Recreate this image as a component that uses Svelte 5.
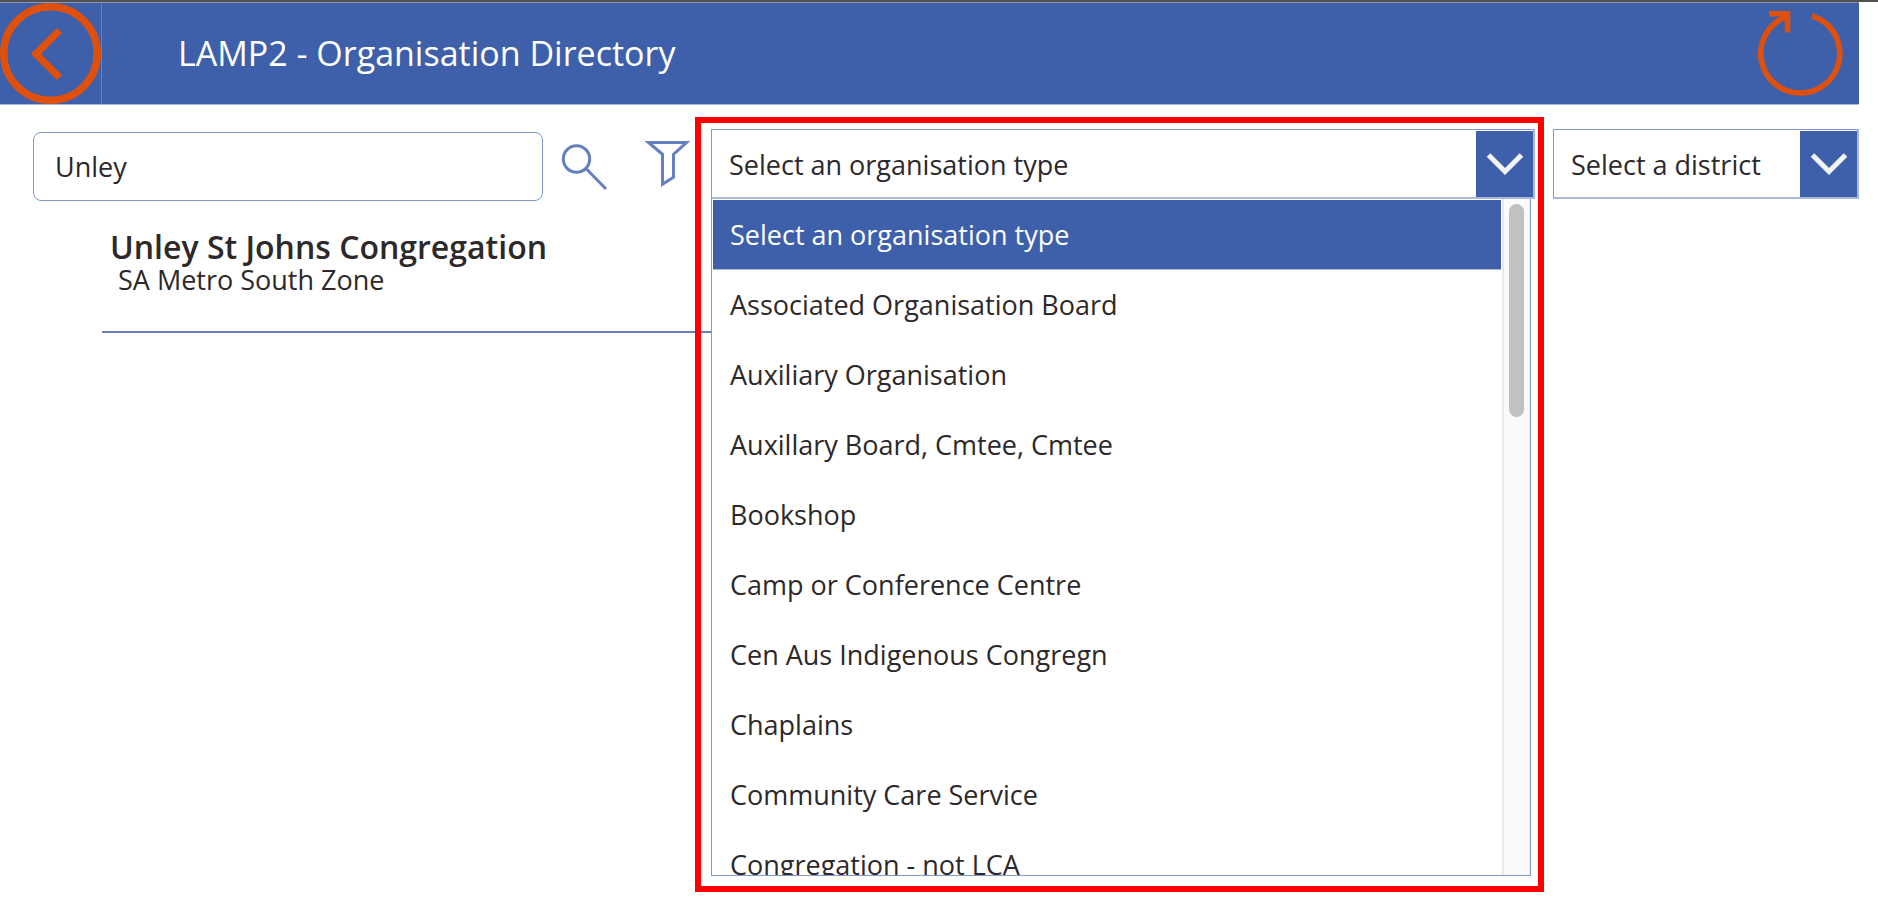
<script>
  const types = [
    "Select an organisation type",
    "Associated Organisation Board",
    "Auxiliary Organisation",
    "Auxillary Board, Cmtee, Cmtee",
    "Bookshop",
    "Camp or Conference Centre",
    "Cen Aus Indigenous Congregn",
    "Chaplains",
    "Community Care Service",
    "Congregation - not LCA",
  ];

  const results = [
    { name: "Unley St Johns Congregation", zone: "SA Metro South Zone" },
  ];

  let search = $state("Unley");
  let type = $state(types[0]);
  let open = $state(true);

  function toggle(event) {
    event.preventDefault();
    open = !open;
  }

  function pick(item) {
    type = item;
    open = false;
  }
</script>

{#snippet chevron()}
  <span class="combo__arrow">
    <svg viewBox="0 0 57 66" aria-hidden="true">
      <path d="M12.5 24 L29 40.500 L45.500 24" />
    </svg>
  </span>
{/snippet}

<header class="header">
  <button class="header__back" aria-label="Back">
    <svg viewBox="0 0 101 101" aria-hidden="true">
      <circle cx="50.5" cy="50.5" r="46.8" stroke-width="7.4" />
      <path d="M59.500 27.500 L36 51 L59.500 74.500" stroke-width="7.4" />
    </svg>
  </button>
  <h1>LAMP2 - Organisation Directory</h1>
  <button class="header__refresh" aria-label="Refresh">
    <svg viewBox="0 0 86 86" aria-hidden="true">
      <path d="M54 4.800 A39.500 39.500 0 1 1 28.500 5.500" stroke-width="5.600" />
      <path d="M11 2.800 H29.500 V21.500" stroke-width="5.600" />
    </svg>
  </button>
</header>

<main class="directory">
  <section class="finder">
    <div class="finder__bar">
      <input type="text" aria-label="Search organisations" bind:value={search} />
      <button class="finder__search" aria-label="Search">
        <svg viewBox="0 0 46 46" aria-hidden="true">
          <circle cx="15.5" cy="15" r="13.2" />
          <path d="M25 24.500 L45 45" />
        </svg>
      </button>
      <button class="finder__filter" aria-label="Filter">
        <svg viewBox="0 0 46 54" aria-hidden="true">
          <path d="M3.500 2.500 H41.500 L28.500 14.300 V37.300 L17.500 44.300 V14.300 Z" />
        </svg>
      </button>
    </div>

    <ul class="results">
      {#each results as result}
        <li>
          <h2>{result.name}</h2>
          <p>{result.zone}</p>
        </li>
      {/each}
    </ul>
  </section>

  <div class="picker">
    <div class="combo">
      <select
        aria-label="Organisation type"
        bind:value={type}
        onmousedown={toggle}
      >
        {#each types as item}
          <option>{item}</option>
        {/each}
      </select>
      {@render chevron()}
    </div>
    {#if open}
      <div class="menu">
        <ul class="menu__list" role="listbox" aria-label="Organisation types">
          {#each types as item}
            <li role="option" aria-selected={item === type}>
              <button
                class:menu__item--selected={item === type}
                onclick={() => pick(item)}>{item}</button
              >
            </li>
          {/each}
        </ul>
        <div class="menu__track">
          <div class="menu__thumb"></div>
        </div>
      </div>
    {/if}
  </div>

  <div class="district">
    <div class="combo">
      <select aria-label="District">
        <option>Select a district</option>
      </select>
      {@render chevron()}
    </div>
  </div>
</main>

<style>
  :global(body) {
    margin: 0;
    background: #fff;
    color: #2d2829;
    font-family: "Open Sans", "Noto Sans", sans-serif;
    font-size: 27px;
  }

  :global(#app) {
    --blue: #3e60aa;
    --line: #8099cf;
    --orange: #e0500d;
    border-top: 2px solid #505050;
  }

  *,
  *::before {
    box-sizing: border-box;
  }

  button {
    padding: 0;
    border: 0;
    background: none;
    color: inherit;
    font: inherit;
    cursor: pointer;
  }

  svg {
    display: block;
    width: 100%;
    fill: none;
  }

  h1,
  h2,
  p,
  ul {
    margin: 0;
    padding: 0;
    list-style: none;
  }

  .header {
    display: flex;
    align-items: center;
    margin-right: 19px;
    border-top: 1px solid #8c96ac;
    border-bottom: 1px solid #a9b9de;
    background: var(--blue);
    color: #fff;
  }

  .header svg {
    stroke: var(--orange);
  }

  .header__back {
    width: 102px;
    border-right: 1px solid #6580bf;
  }

  .header h1 {
    flex: 1;
    padding: 0 0 2px 76px;
    font-size: 34px;
    font-weight: 400;
    line-height: 48px;
  }

  .header__refresh {
    width: 86px;
    margin-right: 15px;
  }

  .directory {
    display: grid;
    grid-template-columns: minmax(0, 695fr) minmax(0, 849fr) minmax(0, 315fr);
    align-items: start;
    margin-right: 19px;
    padding-top: 12px;
  }

  .finder__bar {
    display: flex;
    align-items: center;
    padding: 15px 4px 0 33px;
  }

  .finder__bar input {
    flex: 1;
    min-width: 0;
    height: 69px;
    padding: 0 21px;
    border: 1px solid var(--line);
    border-radius: 8px;
    background: #fff;
    color: inherit;
    font: inherit;
  }

  .finder__bar svg {
    overflow: visible;
    stroke: #6480bf;
    stroke-width: 3;
  }

  .finder__search {
    width: 46px;
    margin-left: 18px;
  }

  .finder__filter {
    width: 46px;
    margin-left: 38px;
  }

  .results {
    margin: 0 -17px 0 102px;
  }

  .results li {
    padding: 28px 8px 36px;
    border-bottom: 2px solid #6480bf;
  }

  .results h2 {
    font-size: 32px;
    font-weight: 600;
    line-height: 36px;
    white-space: nowrap;
  }

  .results p {
    padding-left: 8px;
    line-height: 30px;
  }

  /* highlight frame around the organisation type drop-down */
  .picker {
    position: relative;
    padding: 6px 3px 10px 10px;
    border: 6px solid #f00;
  }

  .district {
    padding: 12px 0 0 9px;
  }

  .combo {
    display: grid;
    grid-template-columns: 1fr 57px;
    height: 70px;
    border: 1px solid var(--line);
    border-right: 2px solid #a9b9de;
    border-bottom: 2px solid #a9b9de;
    background: #fff;
  }

  .combo select {
    grid-area: 1 / 1 / 2 / 3;
    width: 100%;
    padding: 0 60px 0 17px;
    border: 0;
    background: none;
    color: inherit;
    font: inherit;
    appearance: none;
  }

  .combo__arrow {
    grid-area: 1 / 2 / 2 / 3;
    margin: 1px 0;
    background: var(--blue);
    pointer-events: none;
  }

  .combo__arrow svg {
    stroke: #f3f3f3;
    stroke-width: 5;
  }

  .menu {
    display: flex;
    height: calc(100vh - 225px);
    margin-right: 4px;
    padding-left: 1px;
    border: 1px solid var(--line);
    border-top: 0;
    background: #fff;
  }

  .menu__list {
    flex: 1;
    padding-top: 1px;
    overflow-y: auto;
    scrollbar-width: none;
  }

  .menu__list button {
    display: block;
    width: 100%;
    height: 70px;
    padding: 0 17px 1px;
    border-bottom: 1px solid transparent;
    text-align: left;
  }

  .menu__list .menu__item--selected {
    background: var(--blue);
    border-bottom-color: #a9b9de;
    color: #fff;
  }

  .menu__track {
    width: 28px;
    margin-left: 1px;
    padding: 5px;
    border-left: 2px solid #e8e8e8;
    border-right: 1px solid #ececec;
    background: #fafafa;
  }

  .menu__thumb {
    width: 15px;
    height: 213px;
    border-radius: 8px;
    background: #c1c1c1;
  }
</style>
